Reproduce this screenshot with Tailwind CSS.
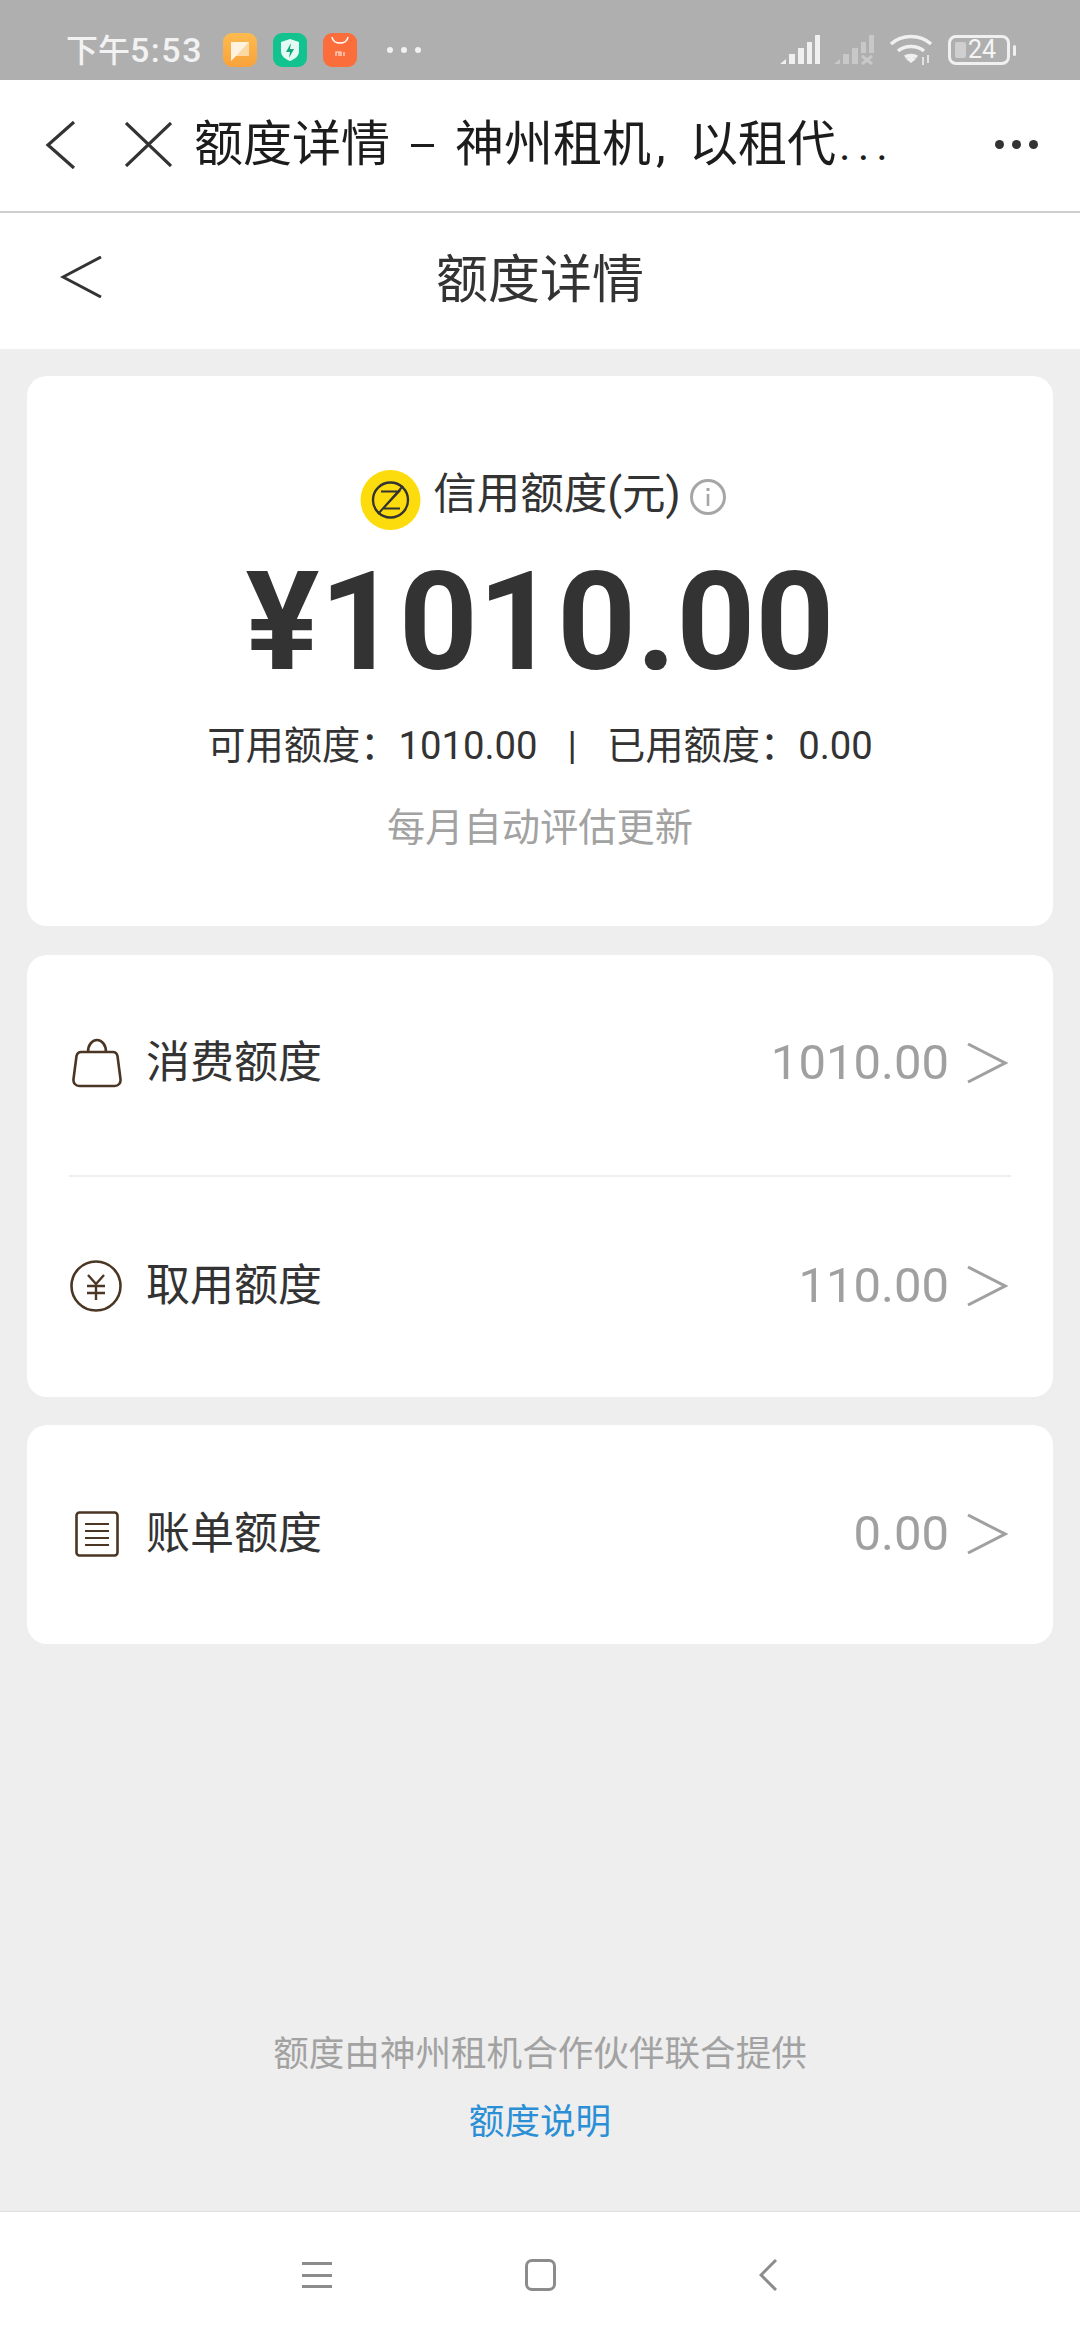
<!DOCTYPE html>
<html lang="zh-CN">
<head>
<meta charset="utf-8">
<script src="https://cdn.jsdelivr.net/npm/@tailwindcss/browser@4"></script>
</head>
<body class="m-0">
<div class="w-[1080px] h-[2340px] flex flex-col bg-[#eeeeee] overflow-hidden font-['Roboto','Noto_Sans_CJK_SC',sans-serif]">

  <!-- status bar -->
  <div class="h-[80px] shrink-0 bg-[#afafaf] flex items-center pl-[66px] pr-[64px] pt-[20px] text-[#f2f2f2]">
    <span class="w-[157px] shrink-0 text-[32px] leading-[40px] font-medium whitespace-nowrap">下午<span class="text-[34px] tracking-[1.500px]">5:53</span></span>
    <div class="flex gap-[16px]">
      <svg class="w-[34px] h-[34px]" viewBox="0 0 34 34"><defs><linearGradient id="o" x1="0" y1="0" x2="0" y2="1"><stop offset="0" stop-color="#fdbb4f"/><stop offset="1" stop-color="#f9a23b"/></linearGradient></defs><rect width="34" height="34" rx="9" fill="url(#o)"/><path d="M8 9h18v14H13l-5 5z" fill="#fff3df"/><path d="M26 9v14H13z" fill="#fbd9a5"/></svg>
      <svg class="w-[34px] h-[34px]" viewBox="0 0 34 34"><rect width="34" height="34" rx="9" fill="#12c38f"/><path d="M17 6l9 3v9c0 5-4 8-9 10-5-2-9-5-9-10V9z" fill="#e4fbf3"/><path d="M18 10l-5 9h4l-1 6 5-9h-4z" fill="#12a77c"/></svg>
      <svg class="w-[34px] h-[34px]" viewBox="0 0 34 34"><rect width="34" height="34" rx="9" fill="#fb6e3c"/><path d="M9 4c1 8 15 8 16 0" fill="none" stroke="#fff" stroke-width="1.6"/><path d="M13 23v-4h3v4M16 21v-2h2v4M21 19v4" fill="none" stroke="#ffe3d6" stroke-width="1.2"/></svg>
    </div>
    <div class="ml-[30px] flex gap-[8px]">
      <span class="w-[6px] h-[6px] rounded-full bg-[#f2f2f2]"></span>
      <span class="w-[6px] h-[6px] rounded-full bg-[#f2f2f2]"></span>
      <span class="w-[6px] h-[6px] rounded-full bg-[#f2f2f2]"></span>
    </div>
    <div class="ml-auto flex items-center">
      <svg class="w-[40px] h-[30px]" viewBox="0 0 40 30" fill="#f0f0f0"><path d="M0 29l6-5v5z"/><rect x="9" y="19" width="6" height="10"/><rect x="18" y="13" width="6" height="16"/><rect x="27" y="7" width="5" height="22"/><rect x="35" y="0" width="5" height="29"/></svg>
      <svg class="ml-[14px] w-[40px] h-[30px]" viewBox="0 0 40 30" fill="#c8c8c8"><path d="M0 29l6-5v5z"/><rect x="9" y="19" width="6" height="10"/><rect x="18" y="13" width="6" height="16"/><rect x="27" y="7" width="5" height="11"/><rect x="35" y="0" width="5" height="18"/><path d="M28 21l10 8M38 21l-10 8" stroke="#c8c8c8" stroke-width="3"/></svg>
      <svg class="ml-[16px] w-[42px] h-[32px]" viewBox="0 0 42 32" fill="none" stroke="#f0f0f0" stroke-width="3.4"><path d="M1 10c11-10 29-10 40 0"/><path d="M8 17c7-6 19-6 26 0"/><path d="M15 23c3-2 9-2 12 0" /><path d="M16 25l5-3 5 3-5 4z" fill="#f0f0f0" stroke="none"/><path d="M33 23v8M38 21v8" stroke-width="1.6"/></svg>
      <div class="ml-[16px] relative w-[62px] h-[30px] rounded-[8px] border-[3px] border-[#f0f0f0] flex items-center justify-center">
        <span class="absolute left-[4px] top-[4px] w-[11px] h-[16px] rounded-[2px] bg-[#cfcfcf]"></span>
        <span class="relative text-[25px] leading-[24px] text-[#f5f5f5] pl-[6px]">24</span>
      </div>
      <span class="ml-[3px] w-[3px] h-[11px] rounded-full bg-[#f0f0f0]"></span>
    </div>
  </div>

  <!-- browser bar -->
  <div class="h-[133px] shrink-0 bg-white border-b-[2px] border-[#cfcfcf] flex items-center pb-[2px]">
    <svg class="ml-[45px] w-[31px] h-[48px]" viewBox="0 0 31 48" fill="none" stroke="#333" stroke-width="3.2"><path d="M29 1L3 24l26 23"/></svg>
    <svg class="ml-[49px] w-[47px] h-[45px]" viewBox="0 0 47 45" fill="none" stroke="#333" stroke-width="3.2"><path d="M1 1l45 43M46 1L1 44"/></svg>
    <div class="ml-[22px] flex items-center text-[49px] leading-[60px] text-[#1c1c1c] whitespace-nowrap">
      <span>额度详情</span>
      <span class="ml-[21px] w-[23px] h-[3px] bg-[#1c1c1c] mt-[2px]"></span>
      <span class="ml-[21px]">神州租机</span>
      <span class="ml-[5px] w-[33px]">,</span>
      <span>以租代</span>
      <span class="ml-[3px] tracking-[7px] text-[44px]">...</span>
    </div>
    <div class="ml-auto mr-[42px] flex gap-[8px]">
      <span class="w-[9px] h-[9px] rounded-full bg-[#333]"></span>
      <span class="w-[9px] h-[9px] rounded-full bg-[#333]"></span>
      <span class="w-[9px] h-[9px] rounded-full bg-[#333]"></span>
    </div>
  </div>

  <!-- page header -->
  <div class="relative h-[136px] shrink-0 bg-white flex items-center justify-center">
    <svg class="absolute left-[60px] top-[43px] w-[42px] h-[42px]" viewBox="0 0 42 42" fill="none" stroke="#333" stroke-width="3"><path d="M41 1L3 21l38 20"/></svg>
    <span class="text-[52px] leading-[64px] text-[#333]">额度详情</span>
  </div>

  <!-- content -->
  <div class="flex-1 flex flex-col px-[27px] pt-[27px]">
    <div class="h-[550px] shrink-0 rounded-[20px] bg-white flex flex-col items-center pt-[90px]">
      <div class="flex items-center h-[60px] pl-[6px]">
        <svg class="w-[61px] h-[60px] mr-[12px] mt-[8px]" viewBox="0 0 61 60"><circle cx="30.5" cy="30" r="30" fill="#fcdc0c"/><circle cx="30.5" cy="30" r="17.5" fill="none" stroke="#333" stroke-width="2.4"/><path d="M21 21.5h18L23 38.5h17M43 16L18 44" fill="none" stroke="#333" stroke-width="2"/></svg>
        <span class="text-[43.500px] leading-[60px] text-[#333] -mt-[2px] whitespace-nowrap">信用额度(元)</span>
        <svg class="w-[36px] h-[36px] ml-[9px] mt-[2px]" viewBox="0 0 36 36" fill="none" stroke="#a6a6a6" stroke-width="3"><circle cx="18" cy="18" r="16.5"/><path d="M18 15v12" stroke-width="2.6"/><path d="M18 9v3" stroke-width="3"/></svg>
      </div>
      <div class="mt-[11px] h-[170px] text-[138px] leading-[170px] font-bold text-[#333] whitespace-nowrap">¥1010.00</div>
      <div class="mt-[14px] h-[50px] flex items-center text-[38.250px] leading-[50px] text-[#333] whitespace-nowrap">
        <span>可用额度：1010.00</span><span class="mx-[30px]">|</span><span>已用额度：0.00</span>
      </div>
      <div class="mt-[32px] h-[50px] text-[38.250px] leading-[50px] text-[#a2a2a2]">每月自动评估更新</div>
    </div>

    <div class="mt-[29px] h-[442px] shrink-0 rounded-[20px] bg-white flex flex-col px-[42px]">
      <div class="h-[220px] shrink-0 flex items-center pb-[5px]">
        <div class="w-[77px] shrink-0">
          <svg class="w-[50px] h-[50px] ml-[3px]" viewBox="0 0 50 50" fill="none" stroke="#4a3623" stroke-width="2.6"><path d="M9 14h32c3 0 4 2 4.500 4l3 23c.5 4-2 7-6 7H7.500c-4 0-6.500-3-6-7l3-23c.5-2 1.500-4 4.500-4z"/><path d="M16 14c0-7 4-12 9-12s9 5 9 12"/></svg>
        </div>
        <span class="text-[44px] leading-[60px] text-[#333]">消费额度</span>
        <span class="ml-auto text-[49px] leading-[60px] text-[#a0a0a0]">1010.00</span>
        <svg class="ml-[18px] mr-[3px] w-[41px] h-[40px]" viewBox="0 0 41 40" fill="none" stroke="#a0a0a0" stroke-width="3"><path d="M1 1l37 19L1 39"/></svg>
      </div>
      <div class="h-[2px] bg-[#efefef] shrink-0"></div>
      <div class="flex-1 flex items-center pb-[3px]">
        <div class="w-[77px] shrink-0">
          <svg class="w-[52px] h-[52px] ml-[1px]" viewBox="0 0 52 52" fill="none" stroke="#4a3623" stroke-width="2.6"><circle cx="26" cy="26" r="24.500"/><path d="M18 15l8 9 8-9M17 26h18M17 33h18M26 24v16" stroke-width="2.400"/></svg>
        </div>
        <span class="text-[44px] leading-[60px] text-[#333]">取用额度</span>
        <span class="ml-auto text-[49px] leading-[60px] text-[#a0a0a0]">110.00</span>
        <svg class="ml-[18px] mr-[3px] w-[41px] h-[40px]" viewBox="0 0 41 40" fill="none" stroke="#a0a0a0" stroke-width="3"><path d="M1 1l37 19L1 39"/></svg>
      </div>
    </div>

    <div class="mt-[28px] h-[219px] shrink-0 rounded-[20px] bg-white flex items-center px-[42px] pb-[2px]">
      <div class="w-[77px] shrink-0">
        <svg class="w-[44px] h-[46px] ml-[6px]" viewBox="0 0 44 46" fill="none" stroke="#4a3623" stroke-width="2.6"><rect x="1.500" y="1.500" width="41" height="43" rx="3"/><path d="M10 13h24M10 20h24M10 27h24M10 34h24" stroke-width="2.200"/></svg>
      </div>
      <span class="text-[44px] leading-[60px] text-[#333]">账单额度</span>
      <span class="ml-auto text-[49px] leading-[60px] text-[#a0a0a0]">0.00</span>
      <svg class="ml-[18px] mr-[3px] w-[41px] h-[40px]" viewBox="0 0 41 40" fill="none" stroke="#a0a0a0" stroke-width="3"><path d="M1 1l37 19L1 39"/></svg>
    </div>

    <div class="mt-auto flex flex-col items-center pb-[64px]">
      <div class="text-[35.600px] leading-[50px] text-[#a2a2a2]">额度由神州租机合作伙伴联合提供</div>
      <div class="mt-[18px] text-[35.600px] leading-[50px] text-[#2b8fd6]">额度说明</div>
    </div>
  </div>

  <!-- nav bar -->
  <div class="h-[129px] shrink-0 bg-white border-t-[1px] border-[#dddddd] relative flex items-start pt-[47px]">
    <div class="ml-[302px] mt-[3px] w-[30px] h-[26px] flex flex-col justify-between">
      <span class="h-[3px] bg-[#8c8c8c]"></span><span class="h-[3px] bg-[#8c8c8c]"></span><span class="h-[3px] bg-[#8c8c8c]"></span>
    </div>
    <div class="ml-[193px] w-[31px] h-[32px] rounded-[7px] border-[3px] border-[#8c8c8c]"></div>
    <svg class="ml-[203px] w-[18px] h-[32px]" viewBox="0 0 18 32" fill="none" stroke="#8c8c8c" stroke-width="3"><path d="M17 1L2 16l15 15"/></svg>
  </div>
</div>
</body>
</html>
